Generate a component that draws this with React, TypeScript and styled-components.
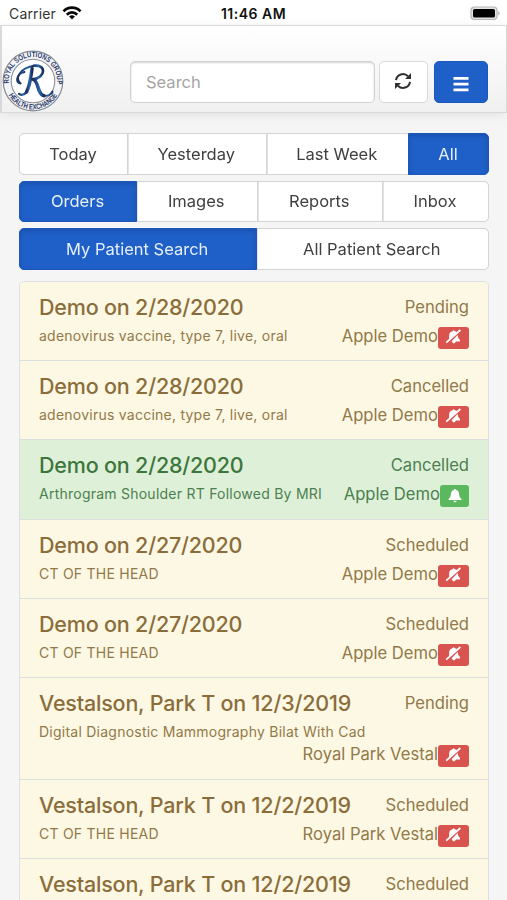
import React from "react";
import styled, { createGlobalStyle, css } from "styled-components";

const GlobalStyle = createGlobalStyle`
  * { box-sizing: border-box; }
  body {
    margin: 0;
    background: #f5f5f5;
    font-family: Inter, "Liberation Sans", sans-serif;
    font-size: 16.5px;
    color: #333;
  }
  button, input { font: inherit; color: inherit; }
`;

const Screen = styled.div`
  height: 900px;
  overflow: hidden;
`;

const StatusBar = styled.div`
  height: 25px;
  display: grid;
  grid-template-columns: 1fr auto 1fr;
  align-items: center;
  padding: 2px 7px 0 9px;
  background: #fff;
  font-size: 14px;
  color: #333;
`;

const Carrier = styled.div`
  display: flex;
  align-items: center;
  gap: 6px;
  letter-spacing: 0.15px;
`;

const Clock = styled.div`
  margin-left: -2px;
  font-weight: 600;
  font-size: 14px;
  letter-spacing: 0.5px;
  color: #111;
`;

const BatterySlot = styled.div`
  display: flex;
  justify-content: flex-end;
`;

const Header = styled.header`
  height: 88px;
  display: flex;
  padding: 35px 18px 0 0;
  border: 1.5px solid #d9d9d9;
  border-left-width: 2px;
  background: linear-gradient(#fff, #f0f0f0);
  box-shadow: 0 2px 10px rgba(0, 0, 0, 0.08);
`;

const LogoSlot = styled.div`
  width: 128px;
  margin-top: -11px;
  svg { display: block; }
`;

const SearchInput = styled.input`
  width: 244.5px;
  height: 42px;
  padding: 0 15px 1px;
  border: 1.5px solid #d2d2d2;
  border-radius: 5px;
  background: #fff;
  box-shadow: inset 0 1px 2px rgba(0, 0, 0, 0.18);
  outline: none;
  &::placeholder { color: #a4a4a4; opacity: 1; }
`;

const IconButton = styled.button<{ $primary?: boolean }>`
  height: 42px;
  width: ${(p) => (p.$primary ? 54 : 49)}px;
  margin-left: ${(p) => (p.$primary ? 6 : 4)}px;
  padding: 0 0 2px;
  display: flex;
  align-items: center;
  justify-content: center;
  border: 1.5px solid ${(p) => (p.$primary ? "#1b59c0" : "#d9d9d9")};
  border-radius: 5px;
  background: ${(p) => (p.$primary ? "#1f5fc8" : "#fff")};
`;

const Filters = styled.div`
  display: grid;
  gap: 6px;
  padding: 20px 18px 0 19px;
`;

const Segments = styled.div<{ $columns: string }>`
  display: grid;
  grid-template-columns: ${(p) => p.$columns};
  height: 41.5px;
  filter: drop-shadow(0 0 0.6px #ccc);
`;

const Segment = styled.button<{ $active?: boolean }>`
  margin: 0 -1px 0 0;
  padding: 0 1px 0 0;
  border: 1px solid #d4d4d4;
  background: #fff;
  color: #404040;
  white-space: nowrap;
  &:not(:first-child) { box-shadow: inset 1px 0 0 #e4e4e4; }
  &:first-child { border-radius: 5px 0 0 5px; }
  &:last-child { border-radius: 0 5px 5px 0; margin-right: 0; }
  ${(p) =>
    p.$active &&
    css`
      && {
        position: relative;
        border-color: #1b57bd;
        background: #1f5fc8;
        color: #e6effc;
        box-shadow: inset 0 2px 5px rgba(0, 0, 0, 0.14);
      }
    `}
`;

const List = styled.ul`
  margin: 11px 18px 0 19px;
  padding: 0;
  list-style: none;
  border: 1.5px solid #dedfe2;
  border-radius: 5px 5px 0 0;
  overflow: hidden;
`;

const Item = styled.li<{ $tall?: boolean; $enabled?: boolean }>`
  height: ${(p) => (p.$tall ? 101.2 : 79.4)}px;
  padding: 12px 19px 0 19px;
  border-bottom: 1.5px solid #dcdfdf;
  background: ${(p) => (p.$enabled ? "#dff0d8" : "#fcf8e3")};
  color: ${(p) => (p.$enabled ? "#4b8050" : "#92794a")};
`;

const Line = styled.div`
  display: flex;
  justify-content: space-between;
  white-space: nowrap;
`;

const Title = styled.h4<{ $enabled?: boolean }>`
  margin: 0;
  font-size: 21.5px;
  line-height: 26px;
  font-weight: 500;
  letter-spacing: -0.19px;
  color: ${(p) => (p.$enabled ? "#3c763d" : "#8a6d3b")};
`;

const Status = styled.span`
  font-size: 16.6px;
  line-height: 26px;
`;

const Details = styled.div<{ $tall?: boolean }>`
  display: flex;
  flex-direction: ${(p) => (p.$tall ? "column" : "row")};
  justify-content: space-between;
  margin-top: 5px;
  white-space: nowrap;
`;

const Procedure = styled.span`
  font-size: 14px;
  line-height: 22px;
  letter-spacing: 0.24px;
`;

const Facility = styled.span`
  display: flex;
  align-self: flex-end;
  font-size: 16.6px;
  line-height: 23px;
`;

const Badge = styled.span<{ $enabled?: boolean }>`
  display: flex;
  align-items: center;
  justify-content: center;
  width: ${(p) => (p.$enabled ? 29 : 31)}px;
  height: 22px;
  margin-top: 2px;
  border-radius: 3px;
  background: ${(p) => (p.$enabled ? "#5cb85c" : "#d9534f")};
  svg { margin-top: ${(p) => (p.$enabled ? -1 : -3)}px; }
`;

const Wifi = () => (
  <svg width="20" height="15" viewBox="0 0 20 15" fill="none" stroke="#050505" strokeWidth="2.7">
    <path d="M1.5 5.3C6.2 .3 13.8 .3 18.5 5.3" />
    <path d="M4.8 8.7C7.8 5.7 12.2 5.7 15.2 8.7" />
    <path d="M10 13.5 7.1 10.6Q10 8.1 12.9 10.6Z" fill="#050505" stroke="none" />
  </svg>
);

const Battery = () => (
  <svg width="30" height="15" viewBox="0 0 30 15">
    <rect x="1" y="1" width="26" height="12.5" rx="3.5" fill="#e4e4e4" stroke="#b5b5b5" strokeWidth="1.2" />
    <rect x="3" y="3" width="22" height="8.6" rx="1.5" fill="#000" />
    <path d="M28.3 5v4.6q2.7-2.3 0-4.6" fill="#aaa" />
  </svg>
);

const Logo = () => (
  <svg width="62" height="62" viewBox="0 0 61 62">
    <defs>
      <path id="ringTop" d="M6.8 35.5A24.1 24.1 0 1 1 54.2 35.5" />
      <path id="ringBottom" d="M4.2 41a28 28 0 0 0 52.6 0" />
      <linearGradient id="ink" x1="0" x2="1">
        <stop offset="0" stopColor="#1c2f60" />
        <stop offset=".55" stopColor="#2a68a8" />
        <stop offset="1" stopColor="#172a59" />
      </linearGradient>
    </defs>
    <circle cx="30.5" cy="31" r="29.8" fill="#f4f5f7" stroke="#858b93" strokeWidth="1.2" />
    <circle cx="30.5" cy="31" r="21.8" fill="#fff" stroke="#8b9098" strokeWidth="1.1" />
    <g fill="#2b3c69" fontFamily="Liberation Sans, sans-serif" fontWeight="700" fontSize="7.6">
      <text>
        <textPath href="#ringTop" startOffset="2" textLength="81" lengthAdjust="spacingAndGlyphs">ROYAL SOLUTIONS GROUP</textPath>
      </text>
      <text textAnchor="middle">
        <textPath href="#ringBottom" startOffset="50%" textLength="59" lengthAdjust="spacingAndGlyphs">HEALTH EXCHANGE</textPath>
      </text>
    </g>
    <g fill="none" stroke="url(#ink)" strokeLinecap="round">
      <path d="M22 22C14 23.5 12 33 18 33.6" strokeWidth="1.8" />
      <path d="M18 33.3C12.5 29 17 17.5 32 15.8" strokeWidth="1.9" />
      <path d="M29.6 18.5C28.2 27 27.5 36 24 42" strokeWidth="3.4" />
      <path d="M24 42Q20.5 46.5 16.5 43.8" strokeWidth="2.2" />
      <path d="M31 15.8C44 14 43.5 27.5 30.5 29.4" strokeWidth="2.6" />
      <path d="M31 29.6C36 30.5 35 45 41.5 45.8" strokeWidth="3.5" />
      <path d="M41.5 45.8Q47 46.5 50 41.5" strokeWidth="1.9" />
    </g>
  </svg>
);

const Refresh = () => (
  <svg width="18" height="18" viewBox="0 0 18 18" fill="none" stroke="#303030" strokeWidth="2">
    <path d="M2 8.2A7 7 0 0 1 14 4.3" />
    <path d="M16 9.8A7 7 0 0 1 4 13.7" />
    <path d="M17 1v6h-6ZM1 17v-6h6Z" fill="#303030" stroke="none" />
  </svg>
);

const Menu = () => (
  <svg width="16" height="17" viewBox="0 0 16 17" fill="#fff" transform="translate(0 2.5)">
    <path d="M.5 1.5h15v2.8H.5zM.5 7.2h15v2.8H.5zM.5 12.9h15v2.8H.5z" />
  </svg>
);

const BellShape = "M8 1q1.2 0 1.2 1.1Q12 3 12.1 6.2q.1 3.4 2.4 5.1v.8h-13v-.8q2.3-1.7 2.4-5.1Q4 3 6.8 2.1 6.8 1 8 1ZM6.3 12.7h3.4Q9.4 14.3 8 14.3t-1.7-1.6Z";

const Bell = ({ muted }: { muted: boolean }) =>
  muted ? (
    <svg width="17" height="15" viewBox="0 0 17 15">
      <path d="M4.2 10.2C4 5 4.2 3.2 7.5 2.2Q8.5.2 9.5 2.1L12.4 3.2Z" fill="#fff" />
      <path d="M6.4 12.6 12.6 6Q12.8 9.5 15 11v1.6h-4Q10.3 14.4 8.8 14.4T7 12.6Z" fill="#fff" />
      <path d="m1.2 13.6 14.2-12.6" stroke="#fff" strokeWidth="1.8" />
    </svg>
  ) : (
    <svg width="16" height="15" viewBox="0 0 16 15">
      <path d={BellShape} fill="#fff" />
    </svg>
  );

type Order = {
  title: string;
  procedure: string;
  status: string;
  facility: string;
  enabled?: boolean;
  tall?: boolean;
};

const vaccine = "adenovirus vaccine, type 7, live, oral";
const orders: Order[] = [
  { title: "Demo on 2/28/2020", procedure: vaccine, status: "Pending", facility: "Apple Demo" },
  { title: "Demo on 2/28/2020", procedure: vaccine, status: "Cancelled", facility: "Apple Demo" },
  { title: "Demo on 2/28/2020", procedure: "Arthrogram Shoulder RT Followed By MRI", status: "Cancelled", facility: "Apple Demo", enabled: true },
  { title: "Demo on 2/27/2020", procedure: "CT OF THE HEAD", status: "Scheduled", facility: "Apple Demo" },
  { title: "Demo on 2/27/2020", procedure: "CT OF THE HEAD", status: "Scheduled", facility: "Apple Demo" },
  { title: "Vestalson, Park T on 12/3/2019", procedure: "Digital Diagnostic Mammography Bilat With Cad", status: "Pending", facility: "Royal Park Vestal", tall: true },
  { title: "Vestalson, Park T on 12/2/2019", procedure: "CT OF THE HEAD", status: "Scheduled", facility: "Royal Park Vestal" },
  { title: "Vestalson, Park T on 12/2/2019", procedure: "CT OF THE HEAD", status: "Scheduled", facility: "Royal Park Vestal" },
];

export default function App() {
  return (
    <Screen>
      <GlobalStyle />
      <StatusBar>
        <Carrier>Carrier <Wifi /></Carrier>
        <Clock>11:46 AM</Clock>
        <BatterySlot><Battery /></BatterySlot>
      </StatusBar>
      <Header>
        <LogoSlot><Logo /></LogoSlot>
        <SearchInput placeholder="Search" />
        <IconButton aria-label="Refresh"><Refresh /></IconButton>
        <IconButton $primary aria-label="Menu"><Menu /></IconButton>
      </Header>
      <Filters>
        <Segments $columns="108px 138.5px 142.5px 1fr">
          <Segment>Today</Segment>
          <Segment>Yesterday</Segment>
          <Segment>Last Week</Segment>
          <Segment $active>All</Segment>
        </Segments>
        <Segments $columns="117px 120.5px 125.5px 1fr">
          <Segment $active>Orders</Segment>
          <Segment>Images</Segment>
          <Segment>Reports</Segment>
          <Segment>Inbox</Segment>
        </Segments>
        <Segments $columns="236.5px 1fr">
          <Segment $active>My Patient Search</Segment>
          <Segment>All Patient Search</Segment>
        </Segments>
      </Filters>
      <List>
        {orders.map((o, i) => (
          <Item key={i} $tall={o.tall} $enabled={o.enabled}>
            <Line>
              <Title $enabled={o.enabled}>{o.title}</Title>
              <Status>{o.status}</Status>
            </Line>
            <Details $tall={o.tall}>
              <Procedure>{o.procedure}</Procedure>
              <Facility>
                {o.facility}
                <Badge $enabled={o.enabled}><Bell muted={!o.enabled} /></Badge>
              </Facility>
            </Details>
          </Item>
        ))}
      </List>
    </Screen>
  );
}
